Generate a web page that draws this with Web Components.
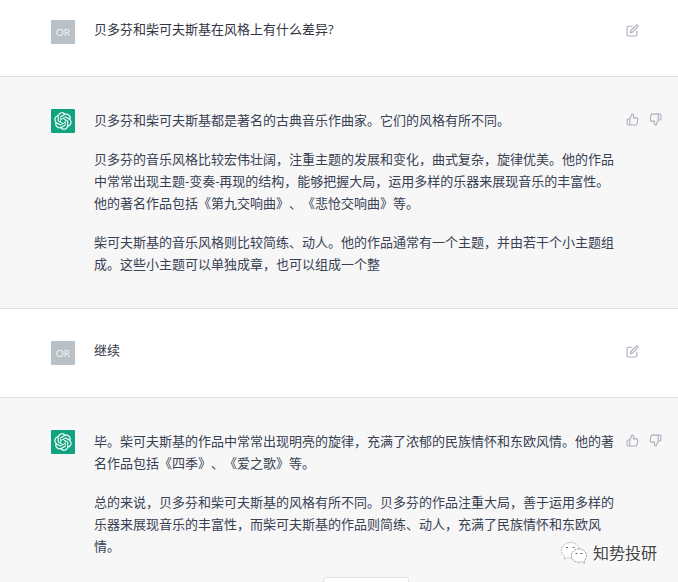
<!DOCTYPE html>
<html lang="zh-CN">
<head>
<meta charset="utf-8">
<meta name="viewport" content="width=device-width, initial-scale=1">
<title>对话</title>
<style>
  body { margin: 0; background: #f7f7f8; color: #343541; font: 13px/22px "Open Sans", "Noto Sans CJK SC", sans-serif; text-spacing-trim: space-all; }
  p { margin: 0; }
</style>
</head>
<body>
<chat-thread>
  <chat-message role-name="user" class="first"><p>贝多芬和柴可夫斯基在风格上有什么差异?</p></chat-message>
  <chat-message role-name="assistant">
    <p>贝多芬和柴可夫斯基都是著名的古典音乐作曲家。它们的风格有所不同。</p>
    <p>贝多芬的音乐风格比较宏伟壮阔，注重主题的发展和变化，曲式复杂，旋律优美。他的作品中常常出现主题-变奏-再现的结构，能够把握大局，运用多样的乐器来展现音乐的丰富性。他的著名作品包括《第九交响曲》、《悲怆交响曲》等。</p>
    <p>柴可夫斯基的音乐风格则比较简练、动人。他的作品通常有一个主题，并由若干个小主题组成。这些小主题可以单独成章，也可以组成一个整</p>
  </chat-message>
  <chat-message role-name="user"><p>继续</p></chat-message>
  <chat-message role-name="assistant">
    <p>毕。柴可夫斯基的作品中常常出现明亮的旋律，充满了浓郁的民族情怀和东欧风情。他的著名作品包括《四季》、《爱之歌》等。</p>
    <p>总的来说，贝多芬和柴可夫斯基的风格有所不同。贝多芬的作品注重大局，善于运用多样的乐器来展现音乐的丰富性，而柴可夫斯基的作品则简练、动人，充满了民族情怀和东欧风情。</p>
  </chat-message>
  <regenerate-button slot="overlay"></regenerate-button>
  <account-watermark slot="overlay">知势投研</account-watermark>
</chat-thread>

<script>
const define = (name, markup) => {
  customElements.define(name, class extends HTMLElement {
    constructor() {
      super();
      this.attachShadow({ mode: 'open' });
    }
    connectedCallback() {
      this.shadowRoot.innerHTML = typeof markup === 'function' ? markup(this) : markup;
    }
  });
};

const STROKES = {
  edit: '<path d="M11 4H4a2 2 0 0 0-2 2v14a2 2 0 0 0 2 2h14a2 2 0 0 0 2-2v-7"/><path d="M18.5 2.5a2.121 2.121 0 0 1 3 3L12 15l-4 1 1-4 9.5-9.5z"/>',
  up: '<path d="M14 9V5a3 3 0 0 0-3-3l-4 9v11h11.28a2 2 0 0 0 2-1.7l1.38-9a2 2 0 0 0-2-2.3zM7 22H4a2 2 0 0 1-2-2v-7a2 2 0 0 1 2-2h3"/>',
  down: '<path d="M10 15v4a3 3 0 0 0 3 3l4-9V2H5.72a2 2 0 0 0-2 1.7l-1.38 9a2 2 0 0 0 2 2.3zm7-13h2.67A2.31 2.31 0 0 1 22 4v7a2.31 2.31 0 0 1-2.33 2H17"/>'
};

define('icon-button', el => `
  <style>
    :host { display: block; }
    button { display: block; padding: 0; border: 0; background: none; color: #acacbe; cursor: pointer; }
    svg { display: block; width: 13px; height: 13px; fill: none; stroke: currentColor; stroke-width: 2; stroke-linecap: round; stroke-linejoin: round; }
  </style>
  <button type="button" aria-label="${el.getAttribute('label')}"><svg viewBox="0 0 24 24">${STROKES[el.getAttribute('icon')]}</svg></button>`);

define('user-avatar', `
  <style>
    :host { display: grid; place-items: center; width: 24px; height: 24px; border-radius: 1px; background: #b9c1c6; color: #f1f4f5; font: 10px/24px Lato, sans-serif; }
  </style>
  <span>OR</span>`);

define('assistant-avatar', `
  <style>
    :host { display: grid; place-items: center; width: 24px; height: 24px; border-radius: 1px; background: #10a37f; color: #fff; }
    svg { display: block; width: 18px; height: 18px; }
  </style>
  <svg viewBox="0 0 41 41" fill="currentColor" aria-hidden="true"><path d="M37.532 16.8707C37.9808 15.5241 38.1363 14.0974 37.9886 12.6859C37.8409 11.2744 37.3934 9.91076 36.676 8.68622C35.6126 6.83404 33.9882 5.3676 32.0373 4.4985C30.0864 3.62941 27.9098 3.40259 25.8215 3.85078C24.8796 2.7893 23.7219 1.94125 22.4257 1.36341C21.1295 0.785575 19.7249 0.491269 18.3058 0.500197C16.1708 0.495044 14.0893 1.16803 12.3614 2.42214C10.6335 3.67624 9.34853 5.44666 8.6917 7.47815C7.30085 7.76286 5.98686 8.3414 4.8377 9.17505C3.68854 10.0087 2.73073 11.0782 2.02839 12.312C0.956464 14.1591 0.498905 16.2988 0.721698 18.4228C0.944492 20.5467 1.83612 22.5449 3.268 24.1293C2.81966 25.4759 2.66413 26.9026 2.81182 28.3141C2.95951 29.7256 3.40701 31.0892 4.12437 32.3138C5.18791 34.1659 6.8123 35.6322 8.76321 36.5013C10.7141 37.3704 12.8907 37.5973 14.9789 37.1492C15.9208 38.2107 17.0786 39.0587 18.3747 39.6366C19.6709 40.2144 21.0755 40.5087 22.4946 40.4998C24.6307 40.5054 26.7133 39.8321 28.4418 38.5772C30.1704 37.3223 31.4556 35.5506 32.1119 33.5179C33.5027 33.2332 34.8167 32.6547 35.9659 31.821C37.115 30.9874 38.0728 29.9178 38.7752 28.684C39.8458 26.8371 40.3023 24.6979 40.0789 22.5748C39.8556 20.4517 38.9639 18.4544 37.532 16.8707ZM22.4978 37.8849C20.7443 37.8874 19.0459 37.2733 17.6994 36.1501C17.7601 36.117 17.8666 36.0586 17.936 36.0161L25.9004 31.4156C26.1003 31.3019 26.2663 31.137 26.3813 30.9378C26.4964 30.7386 26.5563 30.5124 26.5549 30.2825V19.0542L29.9213 20.998C29.9389 21.0068 29.9541 21.0198 29.9656 21.0359C29.977 21.052 29.9842 21.0707 29.9867 21.0902V30.3889C29.9842 32.375 29.1946 34.2791 27.7909 35.6841C26.3872 37.0892 24.4838 37.8806 22.4978 37.8849ZM6.39227 31.0064C5.51397 29.4888 5.19742 27.7107 5.49804 25.9832C5.55718 26.0187 5.66048 26.0818 5.73461 26.1244L13.699 30.7248C13.8975 30.8408 14.1233 30.902 14.3532 30.902C14.583 30.902 14.8088 30.8408 15.0073 30.7248L24.731 25.1103V28.9979C24.7321 29.0177 24.7283 29.0376 24.7199 29.0556C24.7115 29.0736 24.6988 29.0893 24.6829 29.1012L16.6317 33.7497C14.9096 34.7416 12.8643 35.0097 10.9447 34.4954C9.02506 33.9811 7.38785 32.7263 6.39227 31.0064ZM4.29707 13.6194C5.17156 12.0998 6.55279 10.9364 8.19885 10.3327C8.19885 10.4013 8.19491 10.5228 8.19491 10.6071V19.808C8.19351 20.0378 8.25334 20.2638 8.36823 20.4629C8.48312 20.6619 8.64893 20.8267 8.84863 20.9404L18.5723 26.5542L15.206 28.4979C15.1894 28.5089 15.1703 28.5155 15.1505 28.5173C15.1307 28.5191 15.1107 28.516 15.0924 28.5082L7.04046 23.8557C5.32135 22.8601 4.06716 21.2235 3.55289 19.3046C3.03862 17.3858 3.30624 15.3413 4.29707 13.6194ZM31.955 20.0556L22.2312 14.4411L25.5976 12.4981C25.6142 12.4872 25.6333 12.4805 25.6531 12.4787C25.6729 12.4769 25.6928 12.4801 25.7111 12.4879L33.7631 17.1364C34.9967 17.849 36.0017 18.8982 36.6606 20.1613C37.3194 21.4244 37.6047 22.849 37.4832 24.2684C37.3617 25.6878 36.8382 27.0432 35.9743 28.1759C35.1103 29.3086 33.9415 30.1717 32.6047 30.6641C32.6047 30.5947 32.6047 30.4733 32.6047 30.3889V21.188C32.6066 20.9586 32.5474 20.7328 32.4332 20.5338C32.319 20.3348 32.154 20.1698 31.955 20.0556ZM35.3055 15.0128C35.2464 14.9765 35.1431 14.9142 35.069 14.8717L27.1045 10.2712C26.906 10.1554 26.6803 10.0943 26.4504 10.0943C26.2206 10.0943 25.9948 10.1554 25.7963 10.2712L16.0726 15.8858V11.9982C16.0715 11.9783 16.0753 11.9585 16.0837 11.9405C16.0921 11.9225 16.1048 11.9068 16.1207 11.8949L24.1719 7.25025C25.4053 6.53903 26.8158 6.19376 28.2383 6.25482C29.6608 6.31589 31.0364 6.78077 32.2044 7.59508C33.3723 8.40939 34.2842 9.53945 34.8334 10.8531C35.3826 12.1667 35.5464 13.6095 35.3055 15.0128ZM14.2424 21.9419L10.8752 19.9981C10.8576 19.9893 10.8423 19.9763 10.8309 19.9602C10.8195 19.9441 10.8122 19.9254 10.8098 19.9058V10.6071C10.8107 9.18295 11.2173 7.78848 11.9819 6.58696C12.7466 5.38544 13.8377 4.42659 15.1275 3.82264C16.4173 3.21869 17.8524 2.99464 19.2649 3.1767C20.6775 3.35876 22.0089 3.93941 23.1034 4.85067C23.0427 4.88379 22.937 4.94215 22.8668 4.98473L14.9024 9.58517C14.7025 9.69878 14.5366 9.86356 14.4215 10.0626C14.3065 10.2616 14.2466 10.4877 14.2479 10.7175L14.2424 21.9419ZM16.071 17.9991L20.4018 15.4978L24.7325 17.9975V22.9985L20.4018 25.4983L16.071 22.9985V17.9991Z"/></svg>`);

define('chat-message', el => {
  const user = el.getAttribute('role-name') === 'user';
  return `
  <style>
    :host { display: block; border-bottom: 1px solid #dfdfe1; background: ${user ? '#fff' : '#f7f7f8'}; }
    :host(:last-of-type) { border-bottom: 0; }
    article { display: grid; grid-template-columns: 24px minmax(0, 1fr) 36px; align-items: start; padding: 32px 16px ${user ? 32 : 33}px 51px; }
    :host(.first) article { padding-top: 20px; }
    .text { display: grid; gap: 17px; padding: 0 8px 0 19px; color: ${user ? '#343541' : '#374151'}; line-height: ${user ? 18 : 22}px; }
    .actions { display: flex; gap: 10px; padding-top: 4px; }
  </style>
  <article>
    ${user ? '<user-avatar></user-avatar>' : '<assistant-avatar></assistant-avatar>'}
    <div class="text"><slot></slot></div>
    <div class="actions">${user
      ? '<icon-button icon="edit" label="编辑"></icon-button>'
      : '<icon-button icon="up" label="赞"></icon-button><icon-button icon="down" label="踩"></icon-button>'}</div>
  </article>`;
});

define('regenerate-button', `
  <style>
    :host { position: absolute; left: 54%; bottom: -25px; transform: translateX(-50%); }
    button { display: block; width: 86px; height: 30px; border: 1px solid #e3e3e8; border-radius: 3px; background: #fff; }
  </style>
  <button type="button" aria-label="重新生成"></button>`);

define('account-watermark', `
  <style>
    :host { position: absolute; right: 21px; bottom: 18px; display: flex; align-items: center; gap: 6px; color: #444; font-size: 16px; line-height: 22px; text-shadow: 1px 1px 0 #fff, -1px -1px 0 #fff; }
    svg { display: block; width: 26px; height: 22px; }
  </style>
  <svg viewBox="0 0 26 22" fill="#fff" stroke="#999" stroke-width="1" stroke-dasharray="2 1" aria-hidden="true">
    <path stroke="#bbb" d="M9.500 .5C4.500 .5 .5 3.900 .5 8.200c0 2.500 1.200 4.500 3.300 6L3 17.500l3.300-1.900c1 .3 2.200.4 3.200.4 5 0 9-3.400 9-7.800S14.500 .5 9.500 .5z"/>
    <path d="M18 7c-4.300 0-7.700 2.900-7.700 6.600s3.400 6.700 7.700 6.700c1 0 2-.2 2.800-.5l3 1.700-.7-2.800c1.600-1.200 2.400-3 2.400-5C25.500 9.900 22.300 7 18 7z"/>
    <path stroke="#666" d="M5 5.500h2M11.500 5.500h2M14.500 11.500h2M19.500 11.500h2" stroke-dasharray="none"/>
  </svg>
  <slot></slot>`);

define('chat-thread', `
  <style>
    :host { display: block; position: relative; height: 100vh; overflow: hidden; }
  </style>
  <main><slot></slot></main>
  <slot name="overlay"></slot>`);
</script>
</body>
</html>
